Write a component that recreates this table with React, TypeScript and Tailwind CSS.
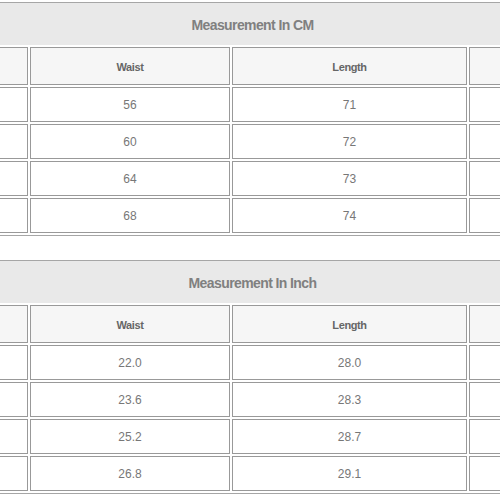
const cm = [
  ["56", "71"],
  ["60", "72"],
  ["64", "73"],
  ["68", "74"],
];

const inch = [
  ["22.0", "28.0"],
  ["23.6", "28.3"],
  ["25.2", "28.7"],
  ["26.8", "29.1"],
];

function SizeTable({ title, rows }: { title: string; rows: string[][] }) {
  return (
    <div className="ml-[-150px] w-[805px] border border-[#a6a6a6]">
      <div className="h-[42px] pt-[3px] bg-[#e9e9e9] flex items-center justify-center text-[14px] font-bold tracking-[-0.6px] text-[#808080]">
        {title}
      </div>
      <table className="table-fixed border-separate border-spacing-[2px] w-[803px]">
        <thead>
          <tr className="h-[38px]">
            <th className="w-[175px] border border-[#999] bg-[#f6f6f6] p-0"></th>
            <th className="w-[200px] border border-[#999] bg-[#f6f6f6] p-0 pt-[3px] text-[11px] font-bold tracking-[-0.4px] text-[#666]">
              Waist
            </th>
            <th className="w-[235px] border border-[#999] bg-[#f6f6f6] p-0 pt-[3px] text-[11px] font-bold tracking-[-0.4px] text-[#666]">
              Length
            </th>
            <th className="w-[183px] border border-[#999] bg-[#f6f6f6] p-0"></th>
          </tr>
        </thead>
        <tbody>
          {rows.map((r, i) => (
            <tr key={i} className="h-[35px]">
              <td className="border border-[#999] p-0"></td>
              <td className="border border-[#999] p-0 pt-[1px] text-center text-[12px] text-[#777]">{r[0]}</td>
              <td className="border border-[#999] p-0 pt-[1px] text-center text-[12px] text-[#777]">{r[1]}</td>
              <td className="border border-[#999] p-0"></td>
            </tr>
          ))}
        </tbody>
      </table>
    </div>
  );
}

export default function App() {
  return (
    <div className="w-[500px] h-[500px] overflow-hidden bg-white pt-[2px] font-['Liberation_Sans',Arial,sans-serif]">
      <SizeTable title="Measurement In CM" rows={cm} />
      <div className="h-[24px]"></div>
      <SizeTable title="Measurement In Inch" rows={inch} />
    </div>
  );
}
